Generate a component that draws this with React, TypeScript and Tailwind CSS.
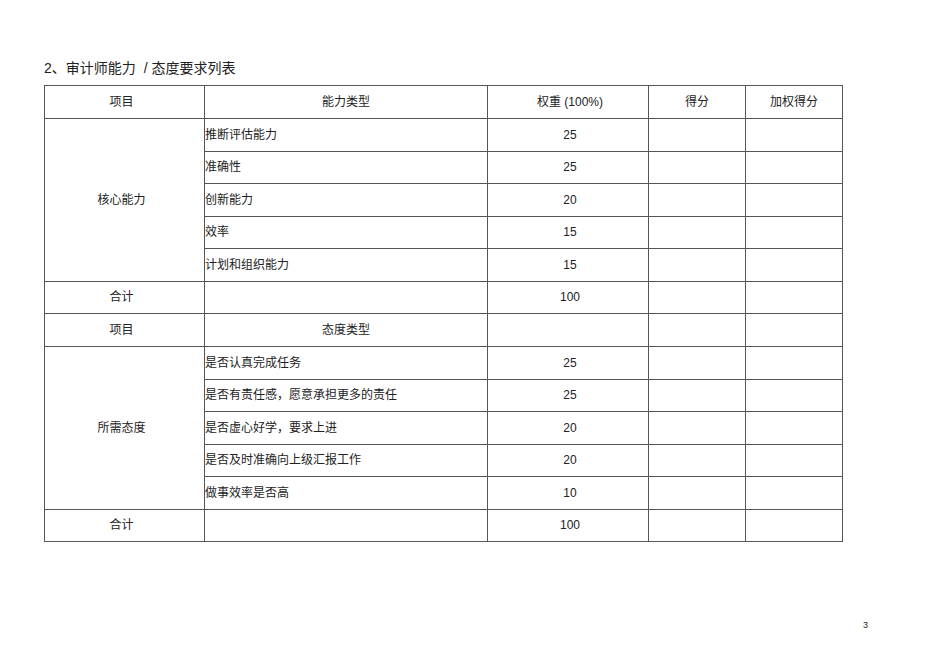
import React from "react";

type Row = { name: string; weight: string };

const abilityRows: Row[] = [
  { name: "推断评估能力", weight: "25" },
  { name: "准确性", weight: "25" },
  { name: "创新能力", weight: "20" },
  { name: "效率", weight: "15" },
  { name: "计划和组织能力", weight: "15" },
];

const attitudeRows: Row[] = [
  { name: "是否认真完成任务", weight: "25" },
  { name: "是否有责任感，愿意承担更多的责任", weight: "25" },
  { name: "是否虚心好学，要求上进", weight: "20" },
  { name: "是否及时准确向上级汇报工作", weight: "20" },
  { name: "做事效率是否高", weight: "10" },
];

const cell = "border border-[#555] p-0 text-center align-middle";
const first = `${cell} pr-[6px]`;
const num = `${cell} pl-[4px]`;

function Block({ label, rows }: { label: string; rows: Row[] }) {
  return (
    <>
      {rows.map((r, i) => (
        <tr key={r.name} className="h-[32.5px]">
          {i === 0 && (
            <td rowSpan={rows.length} className={first}>
              {label}
            </td>
          )}
          <td className={`${cell} text-left`}>{r.name}</td>
          <td className={num}>{r.weight}</td>
          <td className={cell}></td>
          <td className={cell}></td>
        </tr>
      ))}
      <tr className="h-[32.5px]">
        <td className={first}>合计</td>
        <td className={cell}></td>
        <td className={num}>100</td>
        <td className={cell}></td>
        <td className={cell}></td>
      </tr>
    </>
  );
}

export default function App() {
  return (
    <div
      className="relative w-[950px] h-[671px] bg-white text-[#222]"
      style={{ fontFamily: '"Liberation Sans", "Noto Sans CJK SC", sans-serif' }}
    >
      <div className="pl-[44px] pt-[58px]">
        <h2 className="text-[14px] leading-[20px] mb-[7px]">
          2、审计师能力<span className="ml-[8px]">/ 态度要求列表</span>
        </h2>
        <table className="table-fixed border-collapse text-[12px] w-[798px]">
          <colgroup>
            <col className="w-[160px]" />
            <col className="w-[283px]" />
            <col className="w-[161px]" />
            <col className="w-[97px]" />
            <col className="w-[97px]" />
          </colgroup>
          <tbody>
            <tr className="h-[33px]">
              <td className={first}>项目</td>
              <td className={cell}>能力类型</td>
              <td className={num}>权重 (100%)</td>
              <td className={cell}>得分</td>
              <td className={cell}>加权得分</td>
            </tr>
            <Block label="核心能力" rows={abilityRows} />
            <tr className="h-[33px]">
              <td className={first}>项目</td>
              <td className={cell}>态度类型</td>
              <td className={cell}></td>
              <td className={cell}></td>
              <td className={cell}></td>
            </tr>
            <Block label="所需态度" rows={attitudeRows} />
          </tbody>
        </table>
      </div>
      <div className="absolute left-[863px] top-[620px] text-[9px] leading-[10px]">3</div>
    </div>
  );
}
